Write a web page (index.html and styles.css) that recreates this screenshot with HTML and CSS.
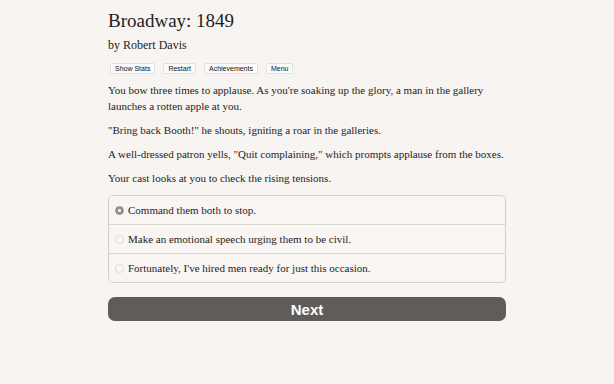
FILE: index.html
```html
<!DOCTYPE html>
<html>
<head>
<meta charset="utf-8">
<link rel="stylesheet" href="styles.css">
</head>
<body>
<div class="page">
  <h1 class="title">Broadway: 1849</h1>
  <h2 class="author">by Robert Davis</h2>
  <div class="toolbar">
    <button class="tbtn">Show Stats</button>
    <button class="tbtn">Restart</button>
    <button class="tbtn">Achievements</button>
    <button class="tbtn">Menu</button>
  </div>
  <p class="para">You bow three times to applause. As you're soaking up the glory, a man in the gallery launches a rotten apple at you.</p>
  <p class="para">"Bring back Booth!" he shouts, igniting a roar in the galleries.</p>
  <p class="para">A well-dressed patron yells, "Quit complaining," which prompts applause from the boxes.</p>
  <p class="para">Your cast looks at you to check the rising tensions.</p>
  <div class="choices">
    <label class="choice"><span class="radio checked"></span>Command them both to stop.</label>
    <label class="choice"><span class="radio"></span>Make an emotional speech urging them to be civil.</label>
    <label class="choice"><span class="radio"></span>Fortunately, I've hired men ready for just this occasion.</label>
  </div>
  <button class="next">Next</button>
</div>
</body>
</html>
```
FILE: styles.css
```css
html, body {
  margin: 0;
  padding: 0;
  background: #f7f4f1;
}
.page {
  width: 398px;
  margin: 0 auto;
  padding-top: 9px;
  font-family: "Liberation Serif", "DejaVu Serif", serif;
  color: #1e1e1e;
}
.title {
  font-size: 19px;
  font-weight: normal;
  margin: 0;
  line-height: 24px;
}
.author {
  font-size: 12px;
  font-weight: normal;
  margin: 5px 0 0 0;
  line-height: 15px;
}
.toolbar {
  display: flex;
  gap: 8px;
  margin: 10px 0 0 2px;
}
.tbtn {
  font-family: "Liberation Sans", Arial, sans-serif;
  font-size: 7px;
  color: #111;
  background: #fbfbfb;
  border: 1px solid #e3e0dd;
  border-radius: 2px;
  padding: 0 4px;
  height: 11px;
  line-height: 9px;
}
.para {
  font-size: 11px;
  line-height: 16px;
  margin: 8px 0 0 0;
}
.para + .para {
  margin-top: 8px;
}
.choices {
  margin-top: 9px;
  border: 1px solid #d3cfcb;
  border-radius: 5px;
  background: #f8f5f2;
}
.choice {
  display: flex;
  align-items: center;
  height: 28px;
  padding-left: 6px;
  font-size: 11px;
  border-top: 1px solid #d9d5d1;
}
.choice:first-child {
  border-top: none;
}
.radio {
  width: 7px;
  height: 7px;
  border-radius: 50%;
  border: 1px solid #dedad6;
  background: #faf8f6;
  margin-right: 4px;
  box-sizing: content-box;
}
.radio.checked {
  background: radial-gradient(circle, #f0eeec 0 1.5px, #8d8a87 2px);
  border-color: #9a9794;
}
.next {
  display: block;
  width: 100%;
  margin-top: 14px;
  height: 24px;
  border: none;
  border-radius: 7px;
  background: #5f5c59;
  color: #fff;
  font-family: "Liberation Sans", Arial, sans-serif;
  font-weight: bold;
  font-size: 15px;
  padding: 0;
}
```
